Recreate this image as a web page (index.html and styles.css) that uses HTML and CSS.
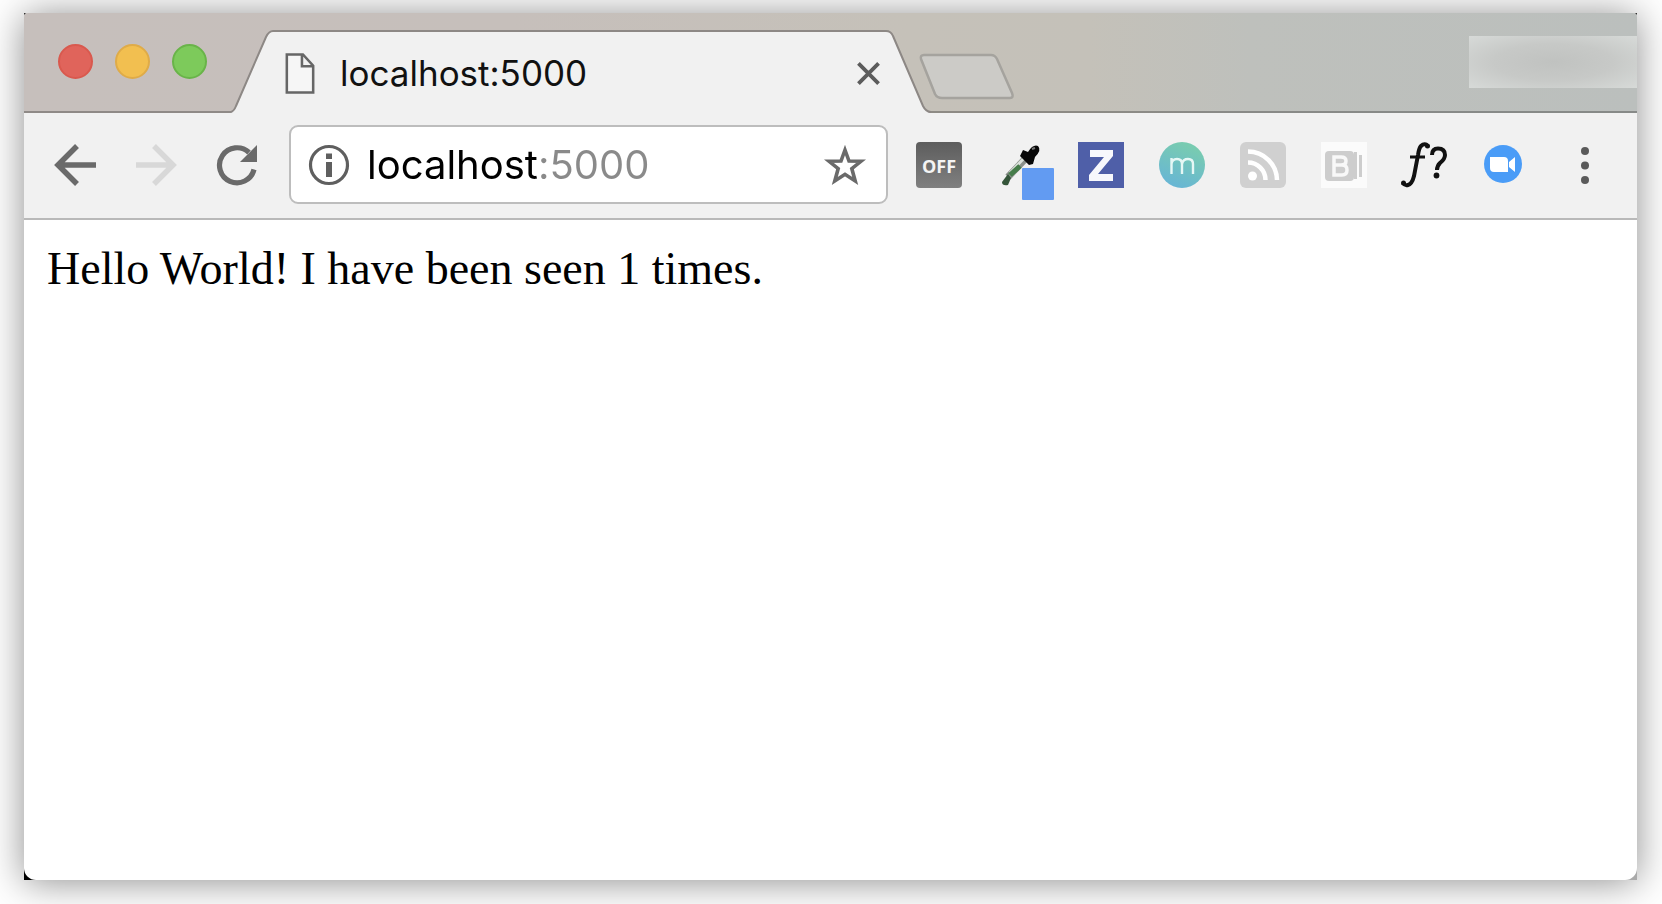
FILE: index.html
```html
<!DOCTYPE html>
<html lang="en">
<head>
<meta charset="utf-8">
<title>localhost:5000</title>
<link rel="stylesheet" href="styles.css">
</head>
<body>
<div class="frame">
  <div class="window">
    <header class="tab-strip">
      <div class="window-controls">
        <button class="light light-close" aria-label="Close window"></button>
        <button class="light light-minimize" aria-label="Minimize window"></button>
        <button class="light light-zoom" aria-label="Zoom window"></button>
      </div>
      <div class="tab">
        <svg class="tab-shape" viewBox="0 0 700 84" aria-hidden="true">
          <path d="M0 84 Q3 82 5 77 L35 8 Q38 2 42 2 H655 Q660 2 662 7 L692 77 Q695 82 699 84Z" fill="#f1f1f1"/>
          <path d="M0 83 Q3 82 5 77 L35 8 Q38 2 42 2 H655 Q660 2 662 7 L692 77 Q695 83 700 83" fill="none" stroke="#8d8885" stroke-width="2"/>
        </svg>
        <svg class="page-icon" viewBox="0 0 30 42" aria-hidden="true">
          <path d="M1.5 1.5H18L28.500 13V40.500H1.500Z M17 1.500V13.500H28" fill="#f6f6f6" stroke="#666" stroke-width="2.600"/>
        </svg>
        <span class="tab-title">localhost:5000</span>
        <button class="tab-close" aria-label="Close tab">
          <svg viewBox="0 0 24 24"><path d="M1.500 1.500L22.500 22.500M22.500 1.500L1.500 22.500" stroke="#5c5c5c" stroke-width="4"/></svg>
        </button>
      </div>
      <button class="new-tab" aria-label="New tab">
        <svg viewBox="0 0 96 48"><path d="M5 2H72Q76 2 78 6L93 40Q95 45 91 45H23Q18 45 16 41L2 6Q1 2 5 2Z" fill="#cccbc7" stroke="#a5a39e" stroke-width="2.500"/></svg>
      </button>
      <div class="profile"></div>
    </header>

    <div class="toolbar">
      <nav class="navigation" aria-label="Navigation">
        <button class="tool" aria-label="Back"><svg viewBox="0 0 46 46"><path d="M43 23H6M24 4L5 23L24 42" fill="none" stroke="#6a6a6a" stroke-width="5.500"/></svg></button>
        <button class="tool" aria-label="Forward" disabled><svg viewBox="0 0 46 46"><path d="M2 23H39M20 4L39 23L20 42" fill="none" stroke="#d8d8d8" stroke-width="5.500"/></svg></button>
        <button class="tool" aria-label="Reload"><svg viewBox="0 0 46 46"><path d="M39 27.500A17.500 17.500 0 1 1 34 10.500" fill="none" stroke="#6a6a6a" stroke-width="5.200"/><path d="M42 3V20H25Z" fill="#6a6a6a"/></svg></button>
      </nav>
      <form class="address-bar">
        <svg class="address-icon" viewBox="0 0 42 42" aria-hidden="true"><circle cx="21" cy="21" r="18.500" fill="none" stroke="#5f5f5f" stroke-width="3.200"/><path d="M18 9.500h6v5.500h-6zM18 18h6v15h-6z" fill="#5f5f5f"/></svg>
        <input class="address" type="text" value="localhost:5000" aria-label="Address">
        <button class="bookmark" type="button" aria-label="Bookmark this page"><svg viewBox="0 0 42 42"><path d="M21 6L25 17L37 17.300L27.800 24.600L31.200 37L21 30.300L10.800 37L14.200 24.600L5 17.300L17 17Z" fill="none" stroke="#6a6a6a" stroke-width="3.600"/></svg></button>
      </form>
      <div class="extensions">
        <button class="tool" aria-label="Off">
          <svg viewBox="0 0 46 46"><defs><linearGradient id="off" x2="0" y2="1"><stop stop-color="#5d5d5d"/><stop offset="1" stop-color="#808080"/></linearGradient></defs><rect width="46" height="46" rx="4" fill="url(#off)"/><text class="glyph-off" x="23" y="31" text-anchor="middle">OFF</text></svg>
        </button>
        <button class="tool" aria-label="Color picker">
          <svg viewBox="0 0 46 46"><path d="M11 35L30 15" stroke="#8b918b" stroke-width="7"/><path d="M13 31L29 14" stroke="#dce2dc" stroke-width="3"/><path d="M13 33L23 24" stroke="#467d4a" stroke-width="5"/><path d="M11 32L14 36L11 43Q5 44 5 40Z" fill="#35553a"/><path d="M26 8L31 10Q36 2 41 4Q45 8 38 15L36 22L32 23L23 14Z" fill="#080808"/><path d="M35 7L38 6" stroke="#777" stroke-width="2"/><rect x="25" y="26" width="32" height="32" rx="1" fill="#629bf2"/></svg>
        </button>
        <button class="tool" aria-label="Z">
          <svg viewBox="0 0 46 46"><rect width="46" height="46" fill="#4f5fa8"/><path d="M12 8H35V14L20 32H35V39H11V33L26 15H12Z" fill="#f7f8fc"/></svg>
        </button>
        <button class="tool" aria-label="m">
          <svg viewBox="0 0 46 46"><defs><linearGradient id="mint" x1=".7" y1="0" x2=".3" y2="1"><stop offset=".1" stop-color="#78cbb1"/><stop offset="1" stop-color="#67b5d6"/></linearGradient></defs><circle cx="23" cy="23" r="23" fill="url(#mint)"/><path d="M12.500 32V16M12.500 22Q13 17 18 17Q23 17 23 22V32M23 22Q24 17 29 17Q34 17 34 22V32" fill="none" stroke="#e6f7f5" stroke-width="2.400"/></svg>
        </button>
        <button class="tool" aria-label="RSS feed">
          <svg viewBox="0 0 46 46"><rect width="46" height="46" rx="6" fill="#d0d0d0"/><circle cx="12.500" cy="34" r="4.500" fill="#fff"/><path d="M8 20.500A17.500 17.500 0 0 1 25.500 38M8 9.500A29 29 0 0 1 37 38" fill="none" stroke="#fff" stroke-width="4.500"/></svg>
        </button>
        <button class="tool" aria-label="B">
          <svg viewBox="0 0 46 46"><rect width="46" height="46" fill="#fbfbfb"/><rect x="4" y="9" width="29" height="30" rx="4" fill="#cdcdcd"/><path d="M33 10h3v27h-3zM38 13h3v22h-3z" fill="#cdcdcd"/><path d="M13 15H20Q25 15 25 19Q25 23 20 23H13ZM13 23H21Q26 23 26 28Q26 33 21 33H13Z" fill="none" stroke="#f8f8f8" stroke-width="3.500"/></svg>
        </button>
        <button class="tool" aria-label="Font finder">
          <svg viewBox="0 0 46 46"><path d="M25 3Q22 1 19 4Q17 6 16 13L12 34Q10 42 6 43Q3 44 1 41" fill="none" stroke="#111" stroke-width="4"/><path d="M8 15H23" stroke="#111" stroke-width="2.800"/><circle cx="1.500" cy="41" r="2.500" fill="#111"/><circle cx="25.500" cy="4" r="2.500" fill="#111"/><path d="M30 13Q30 6.500 36 6.500Q43 6.500 43 13Q43 17 38 21Q35 24 35 28" fill="none" stroke="#111" stroke-width="4"/><circle cx="34.500" cy="33.500" r="2.900" fill="#111"/></svg>
        </button>
        <button class="tool" aria-label="Video meeting">
          <svg viewBox="0 0 46 46"><circle cx="20" cy="22" r="19" fill="#4a9cf7"/><path d="M7 15H21Q25 15 25 19V30H11Q7 30 7 26ZM26 20L32 15V30L26 25Z" fill="#fff"/></svg>
        </button>
      </div>
      <button class="tool" aria-label="Menu"><svg viewBox="0 0 46 46"><g fill="#5a5a5a"><circle cx="24" cy="9" r="4"/><circle cx="24" cy="23.500" r="4"/><circle cx="24" cy="38" r="4"/></g></svg></button>
    </div>

    <main class="page">
      <p class="message">Hello World! I have been seen 1 times.</p>
    </main>
  </div>
</div>
</body>
</html>
```

FILE: styles.css
```css
* {
  box-sizing: border-box;
}

body {
  display: flex;
  min-height: 100vh;
  margin: 0;
  padding: 13px 25px 24px 24px;
  background: #fff;
  font-family: Inter, "Liberation Sans", sans-serif;
}

button {
  display: block;
  flex: none;
  padding: 0;
  border: 0;
  background: none;
}

svg {
  display: block;
  flex: none;
  width: 100%;
  height: 100%;
  overflow: visible;
}

.frame {
  display: flex;
  flex: 1;
  min-width: 0;
  background: linear-gradient(to right, #000 50%, #aaa 50%) bottom / 100% 50% no-repeat, #333;
  box-shadow: 0 2px 36px rgba(0, 0, 0, 0.45);
}

.window {
  display: flex;
  flex: 1;
  flex-direction: column;
  min-width: 0;
  overflow: hidden;
  border-radius: 4px 4px 12px 12px;
  background: #fff;
}

.tab-strip {
  display: flex;
  align-items: flex-end;
  height: 100px;
  border-bottom: 2px solid rgba(0, 0, 0, 0.28);
  background: linear-gradient(to right, #c6bfbc, #c6bfbb 30%, #c5c1b9 55%, #c4c1b9 66%, #bec0bc 76%, #bbbfbd) border-box;
}

.window-controls {
  display: flex;
  align-self: flex-start;
  gap: 22px;
  padding: 31px 24px 0 34px;
}

.light {
  width: 35px;
  height: 35px;
  border: 2px solid #d9594e;
  border-radius: 50%;
  background: #e0645b;
}

.light-minimize {
  border-color: #dfab48;
  background: #f2bf50;
}

.light-zoom {
  border-color: #69b449;
  background: #7dca5b;
}

.tab {
  position: relative;
  display: flex;
  align-items: center;
  width: 700px;
  height: 84px;
  margin-bottom: -2px;
  padding: 4px 48px 0 54px;
}

.tab-shape {
  position: absolute;
  inset: 0;
}

.page-icon {
  position: relative;
  width: 30px;
  height: 41px;
}

.tab-title {
  position: relative;
  flex: 1;
  padding-left: 25px;
  color: #111;
  font-size: 35px;
  line-height: 42px;
}

.tab-close {
  position: relative;
  width: 23px;
  height: 23px;
  margin-right: 3px;
}

.new-tab {
  width: 96px;
  height: 48px;
  margin: 0 0 10px -12px;
}

.profile {
  width: 168px;
  height: 52px;
  margin: 0 0 23px auto;
  background: radial-gradient(ellipse at 50% 50%, #c0c2c0, #c7c9c7 50%, #d7dad8);
}

.toolbar {
  display: flex;
  align-items: center;
  padding: 12px 30px 14px 29px;
  border-bottom: 2px solid #b9b9b9;
  background: #f1f1f1;
}

.tool {
  width: 46px;
  height: 46px;
}

.navigation,
.extensions {
  display: flex;
  gap: 35px;
}

.extensions {
  margin-right: 32px;
}

.address-bar {
  display: flex;
  flex: 1;
  align-items: center;
  min-width: 0;
  height: 79px;
  margin: 0 28px;
  padding: 0 20px 0 17px;
  border: 2px solid #bdbdbd;
  border-radius: 9px;
  background: #fff;
}

.address-icon,
.bookmark {
  width: 42px;
  height: 42px;
}

.address {
  flex: 1;
  width: 100%;
  min-width: 0;
  margin: 0;
  padding: 0 0 0 17px;
  border: 0;
  outline: 0;
  background: linear-gradient(to right, #000 190px, #8a8a8a 190px);
  background-clip: text;
  color: transparent;
  font: 40px/48px Inter, "Liberation Sans", sans-serif;
}

.glyph-off {
  fill: #f4f4f4;
  font: bold 18px "Open Sans", "Liberation Sans", sans-serif;
}

.page {
  flex: 1;
  padding: 24px 23px;
}

.message {
  margin: 0;
  color: #000;
  font-family: "Liberation Serif", serif;
  font-size: 46px;
  line-height: 50px;
}
```
